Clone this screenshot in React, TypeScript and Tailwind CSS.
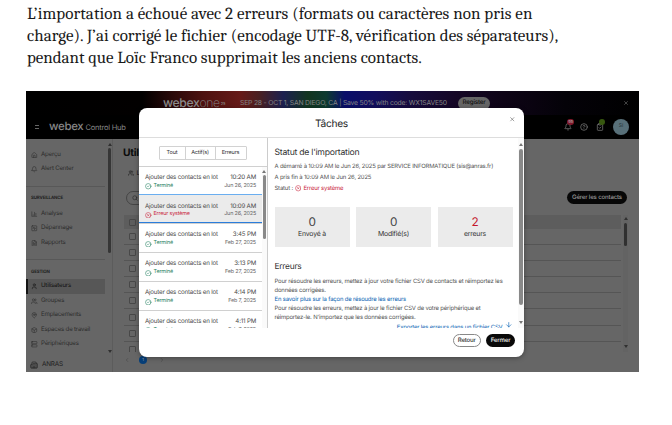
import React from "react";
import {
  Home, Bell, BarChart3, SquareActivity, FileText, User, Users, MapPin, Box, Server, Building2,
  CircleCheck, CircleX, X, Search, CircleHelp, ClipboardCheck, ArrowDown, ChevronLeft, ChevronRight,
} from "lucide-react";

type Icon = React.ComponentType<{ className?: string; strokeWidth?: number }>;

function NavItem({ icon: I, label, active }: { icon: Icon; label: string; active?: boolean }) {
  return (
    <div className={`flex h-[14.5px] w-[79px] items-center gap-[3.5px] ${active ? "border-l-2 border-[#151515] bg-[#575757] pl-[3px] text-[#111]" : "pl-[5px] text-[#2c2c2c]"}`}>
      <I className="size-[6.5px] shrink-0" strokeWidth={2} />
      <span className="text-[6.1px] leading-none">{label}</span>
    </div>
  );
}

function Arrow({ down, dark }: { down?: boolean; dark?: boolean }) {
  return (
    <svg viewBox="0 0 4 3" className={`h-[3px] w-[4px] shrink-0 ${down ? "rotate-180" : ""} ${dark ? "fill-[#303030]" : "fill-[#777]"}`}>
      <path d="M2 0 4 3H0Z" />
    </svg>
  );
}

function Sidebar() {
  return (
    <div className="flex w-[87px] shrink-0 border-r border-[#5c5c5c]">
      <div className="w-[79px] pt-[8.5px]">
        <NavItem icon={Home} label="Aperçu" />
        <NavItem icon={Bell} label="Alert Center" />
        <div className="mt-[9px] h-px bg-[#585858]" />
        <div className="pt-[8.5px] pl-[5px] text-[4.4px] leading-[7px] font-bold text-[#202020]">SURVEILLANCE</div>
        <div className="h-[4.5px]" />
        <NavItem icon={BarChart3} label="Analyse" />
        <NavItem icon={SquareActivity} label="Dépannage" />
        <NavItem icon={FileText} label="Rapports" />
        <div className="mt-[9px] h-px bg-[#585858]" />
        <div className="pt-[8.5px] pl-[5px] text-[4.4px] leading-[7px] font-bold text-[#202020]">GESTION</div>
        <div className="h-[3.5px]" />
        <NavItem icon={User} label="Utilisateurs" active />
        <NavItem icon={Users} label="Groupes" />
        <NavItem icon={MapPin} label="Emplacements" />
        <NavItem icon={Box} label="Espaces de travail" />
        <NavItem icon={Server} label="Périphériques" />
        <div className="mt-[5px] flex h-[16px] items-center gap-[4px] pl-[4px] text-[#1f1f1f]">
          <Building2 className="size-[8px]" />
          <span className="text-[6.4px] leading-none">ANRAS</span>
        </div>
      </div>
      <div className="ml-[2px] flex w-[5px] flex-col items-center pt-[3.5px]">
        <Arrow dark />
        <div className="mt-[2px] h-[105px] w-[3px] rounded-full bg-[#363636]" />
        <div className="h-[97px]" />
        <Arrow dark down />
      </div>
    </div>
  );
}

function Content() {
  return (
    <div className="min-w-0 flex-1 pt-[7px] pl-[10px]">
      <div className="h-[14px] w-[16px] overflow-hidden text-[10.3px] leading-[14px] font-bold text-[#0b0b0b]">Util</div>
      <div className="mt-[8px] flex h-[10px] items-center gap-[2.5px] pl-[5px] text-[6.4px] text-[#161616]">
        <Users className="size-[6px]" />
        <span className="leading-none">L</span>
      </div>
      <div className="mt-[11px] flex h-[17px] items-center justify-between pl-[3px]">
        <div className="flex h-[14px] w-[120px] items-center rounded-full border border-[#454545] pl-[5px]">
          <Search className="size-[6px] text-[#1f1f1f]" />
        </div>
        <div className="mr-[12px] flex h-[13px] w-[60px] items-center justify-center rounded-full bg-[#070707] text-[6.1px] font-medium whitespace-nowrap text-[#999]">
          Gérer les contacts
        </div>
      </div>
      <div className="mt-[9px] flex">
        <div className="h-[137px] w-[498px] overflow-hidden pl-[1px]">
          <div className="flex h-[14px] items-center bg-[#5d5d5d] pl-[5px]">
            <div className="size-[7px] rounded-[1px] border border-[#474747]" />
          </div>
          {[0, 1, 2, 3, 4, 5, 6, 7].map((i) => (
            <div key={i} className="flex h-[16.1px] items-center border-b border-[#555] pl-[5px]">
              <div className="size-[7px] rounded-[1px] border border-[#484848]" />
            </div>
          ))}
        </div>
        <div className="ml-[2px] flex w-[5px] flex-col items-center bg-[#636363] pt-[2px]">
          <Arrow dark />
          <div className="mt-[3px] h-[23px] w-[3.5px] rounded-full bg-[#303030]" />
          <div className="h-[99px]" />
          <Arrow dark down />
        </div>
      </div>
      <div className="mt-[3px] flex h-[9px] items-center pl-[1px] text-[#424242]">
        <ChevronLeft className="size-[6px]" />
        <div className="ml-[9px] flex size-[8px] items-center justify-center rounded-full bg-[#063f79] text-[4px] text-[#9ab]">1</div>
        <ChevronRight className="ml-[12px] size-[6px]" />
      </div>
    </div>
  );
}

function Task({ time, date, failed }: { time: string; date: string; failed?: boolean }) {
  return (
    <div className={`flex h-[28.9px] shrink-0 flex-col pr-[5.5px] pl-[6px] text-[#484848] ${failed ? "border-y border-t-[#6aaef0] border-b-[#2b7ddb] bg-[#ebebeb] pt-[7px]" : "border-t border-[#d0d0d0] pt-[7px]"}`}>
      <div className="flex h-[8.5px] items-center justify-between text-[6.15px] leading-none">
        <span>Ajouter des contacts en lot</span>
        <span>{time}</span>
      </div>
      <div className="flex h-[8.5px] items-center justify-between text-[5.4px] leading-none">
        <span className={`flex items-center gap-[2px] ${failed ? "text-[#c9243b]" : "text-[#1b7d5c]"}`}>
          {failed ? <CircleX className="size-[6.5px]" strokeWidth={2} /> : <CircleCheck className="size-[6.5px]" strokeWidth={2} />}
          {failed ? "Erreur système" : "Terminé"}
        </span>
        <span className="text-[#666]">{date}</span>
      </div>
    </div>
  );
}

function Stat({ value, label, bad }: { value: string; label: string; bad?: boolean }) {
  return (
    <div className="flex h-[40px] w-[75px] flex-col items-center bg-[#ebebeb] pt-[8px] text-[#333]">
      <div className={`text-[11.8px] leading-[14px] ${bad ? "text-[#c4162d]" : "text-[#444]"}`}>{value}</div>
      <div className="mt-[0.5px] text-[6.9px] leading-[9px]">{label}</div>
    </div>
  );
}

function Dialog() {
  return (
    <div className="absolute top-[17px] left-[113px] flex h-[249px] w-[385px] flex-col overflow-hidden rounded-[8px] bg-white text-[#333] shadow-[0_1px_5px_rgba(0,0,0,0.35)]">
      <div className="relative flex h-[30px] shrink-0 items-center justify-center border-b border-[#ddd] pt-[4px] text-[10.2px] text-[#252525]">
        Tâches
        <X className="absolute top-[8px] right-[9px] size-[6.5px] text-[#555]" />
      </div>
      <div className="flex h-[190px] shrink-0 overflow-hidden">
        <div className="flex w-[129px] flex-col border-r border-[#ccc]">
          <div className="flex h-[27.5px] shrink-0 justify-center pt-[8px] pr-[1px]">
            <div className="flex h-[14px] rounded-[1px] border border-[#d2d2d2] text-[5.5px] text-[#333]">
              <span className="flex w-[25px] items-center justify-center">Tout</span>
              <span className="flex w-[31px] items-center justify-center border-x border-[#d2d2d2]">Actif(s)</span>
              <span className="flex w-[30px] items-center justify-center">Erreurs</span>
            </div>
          </div>
          <div className="flex min-h-0 flex-1 overflow-hidden">
            <div className="flex w-[122.5px] flex-col">
              <Task time="10:20 AM" date="Jun 26, 2025" />
              <Task time="10:09 AM" date="Jun 26, 2025" failed />
              <Task time="3:45 PM" date="Feb 27, 2025" />
              <Task time="3:13 PM" date="Feb 27, 2025" />
              <Task time="4:14 PM" date="Feb 7, 2025" />
              <Task time="4:11 PM" date="Feb 7, 2025" />
            </div>
            <div className="flex w-[5.5px] flex-col items-center border-t border-[#d0d0d0] bg-[#fafafa] pt-[3px]">
              <Arrow />
              <div className="mt-[2.5px] h-[64px] w-[3px] rounded-full bg-[#898989]" />
            </div>
          </div>
        </div>
        <div className="w-[250px] shrink-0 pt-[9px] pl-[6.5px]">
          <div className="h-[13px] text-[8.7px] leading-[13px] whitespace-nowrap">Statut de l'importation</div>
          <div className="pt-[1px] text-[5.93px] leading-[11.1px] whitespace-nowrap text-[#555]">
            <div>A démarré à 10:09 AM le Jun 26, 2025 par SERVICE INFORMATIQUE (sis@anras.fr)</div>
            <div>A pris fin à 10:09 AM le Jun 26, 2025</div>
            <div className="flex items-center">
              Statut :
              <CircleX className="mr-[2px] ml-[2px] size-[6.5px] text-[#c9243b]" />
              <span className="text-[#c9243b]">Erreur système</span>
            </div>
          </div>
          <div className="mt-[12.7px] flex gap-[6.5px]">
            <Stat value="0" label="Envoyé à" />
            <Stat value="0" label="Modifié(s)" />
            <Stat value="2" label="erreurs" bad />
          </div>
          <div className="mt-[14px] h-[12px] text-[8.4px] leading-[12px]">Erreurs</div>
          <div className="mt-[5px] text-[5.95px] leading-[8.95px] whitespace-nowrap text-[#555]">
            <div>Pour résoudre les erreurs, mettez à jour votre fichier CSV de contacts et réimportez les</div>
            <div>données corrigées.</div>
            <div className="text-[#0b64b4]">En savoir plus sur la façon de résoudre les erreurs</div>
            <div>Pour résoudre les erreurs, mettez à jour le fichier CSV de votre périphérique et</div>
            <div>réimportez-le. N'importez que les données corrigées.</div>
            <div className="flex items-start justify-end gap-[2px] pr-[6px] text-[#0b64b4]">
              <span className="pt-[1px]">Exporter les erreurs dans un fichier CSV</span>
              <ArrowDown className="-mt-[2px] size-[7.5px]" />
            </div>
          </div>
        </div>
        <div className="flex w-[6px] flex-col items-center bg-[#fafafa] pt-[4.5px]">
          <Arrow />
          <div className="mt-[3px] h-[156px] w-[3.5px] shrink-0 rounded-full bg-[#898989]" />
          <div className="h-[16px] shrink-0" />
          <Arrow down />
        </div>
      </div>
      <div className="flex justify-end gap-[5px] pt-[6px] pr-[9px] text-[6.1px] font-medium">
        <div className="flex h-[13px] w-[28.5px] items-center justify-center rounded-full border border-[#888]">Retour</div>
        <div className="flex h-[13px] w-[29px] items-center justify-center rounded-full bg-[#090909] text-[#f0f0f0]">Fermer</div>
      </div>
    </div>
  );
}

export default function App() {
  return (
    <div className="h-[425px] w-[672px] overflow-hidden bg-white [text-rendering:geometricPrecision]">
      <div className="h-[91px] pt-[4px] pl-[27px] font-['Cambria','Caladea','Noto_Serif','Liberation_Serif',serif] text-[17px] leading-[22px] whitespace-nowrap text-[#191919]">
        <div className="tracking-[0.07px]">L’importation a échoué avec 2 erreurs (formats ou caractères non pris en</div>
        <div className="tracking-[0.04px]">charge). J’ai corrigé le fichier (encodage UTF-8, vérification des séparateurs),</div>
        <div className="tracking-[-0.01px]">pendant que Loïc Franco supprimait les anciens contacts.</div>
      </div>
      <div className="relative ml-[26px] flex h-[281px] w-[613px] flex-col overflow-hidden bg-[#666] font-['Inter','Liberation_Sans',sans-serif] [&_*]:tracking-[-0.03em]">
        <div className="flex h-[24px] shrink-0 items-start bg-[linear-gradient(90deg,#000_0%,#020000_19%,#2b0909_24%,#4e1210_29%,#661a18_35%,#4a2022_38%,#1c2050_42%,#12351f_46%,#0c3a30_49%,#0a0e6a_52%,#120e5c_57%,#170c3c_63%,#150726_70%,#0e0416_78%,#040208_88%,#000_100%)]">
          <div className="flex h-[24px] w-full items-center text-[6.8px] leading-none whitespace-nowrap text-[#858585]">
            <span className="ml-[137px] w-[77px] text-[12.2px] leading-[12px] text-[#8c8c8c]">
              <b className="font-medium">webex</b><span className="font-extralight">one</span><sup className="ml-[1px] text-[4px]">25</sup>
            </span>
            <span className="w-[207px]">SEP 28 - OCT 1, SAN DIEGO, CA | Save 50% with code: WX1SAVE50</span>
            <span className="ml-[11px] flex h-[13px] w-[32px] items-center justify-center rounded-full bg-[#666] text-[6.2px] font-medium text-[#111]">Register</span>
            <X className="ml-[133px] size-[6px]" />
          </div>
        </div>
        <div className="flex h-[24px] shrink-0 items-center bg-black text-[#858585]">
          <div className="ml-[9px] flex w-[4px] flex-col gap-[2px]">
            <div className="h-px bg-[#666]" />
            <div className="h-px bg-[#666]" />
          </div>
          <span className="ml-[10px] w-[36.5px] text-[11.5px] leading-none font-medium">webex</span>
          <span className="pt-[1px] text-[7.5px] leading-none">Control Hub</span>
          <div className="ml-auto flex items-center pr-[10px]">
            <div className="relative">
              <Bell className="size-[8px]" />
              <span className="absolute -top-[4px] left-[3px] flex h-[6px] w-[7px] items-center justify-center rounded-full bg-[#80182a] text-[4px] text-[#aaa]">99</span>
            </div>
            <CircleHelp className="ml-[8px] size-[8px]" />
            <div className="relative ml-[8px]">
              <ClipboardCheck className="size-[8px]" />
              <span className="absolute -top-[4px] left-[3px] size-[6px] rounded-full bg-[#37580f]" />
            </div>
            <div className="ml-[9px] flex size-[16px] items-center justify-center rounded-full bg-[#587079] text-[5px] text-[#263238]">SI</div>
          </div>
        </div>
        <div className="flex min-h-0 flex-1">
          <Sidebar />
          <Content />
        </div>
        <Dialog />
      </div>
    </div>
  );
}
